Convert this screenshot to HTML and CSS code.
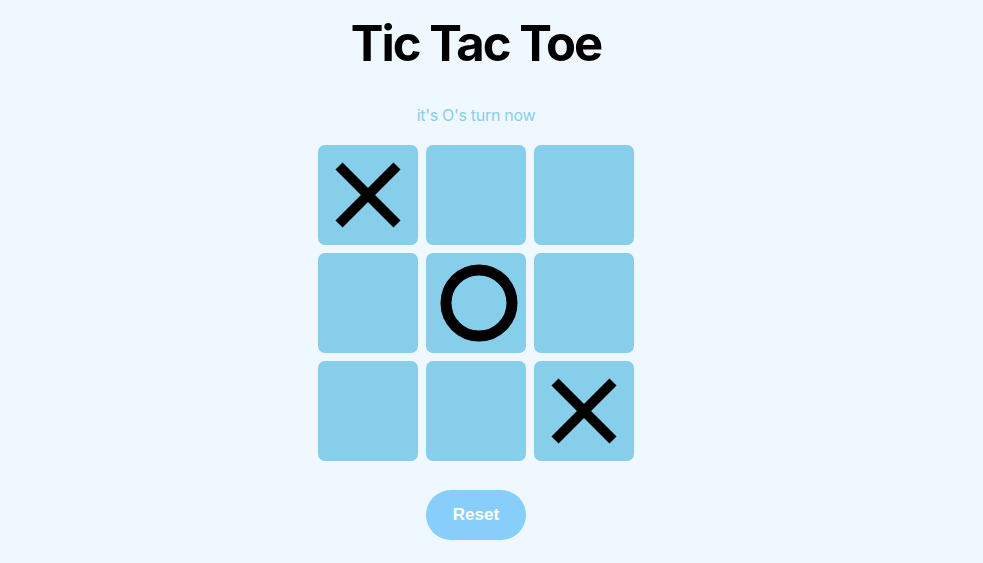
FILE: index.html
```html
<!DOCTYPE html>
<html lang="en">
<head>
<meta charset="utf-8">
<title>Tic Tac Toe</title>
<link rel="stylesheet" href="styles.css">
</head>
<body>
<main class="game">
  <h1 class="title">Tic Tac Toe</h1>
  <p class="status">it's O's turn now</p>
  <div class="board">
    <div class="cell"><svg class="mark" viewBox="0 0 100 100"><line x1="21" y1="21" x2="79" y2="79"/><line x1="79" y1="21" x2="21" y2="79"/></svg></div>
    <div class="cell"></div>
    <div class="cell"></div>
    <div class="cell"></div>
    <div class="cell"><svg class="mark" viewBox="0 0 100 100"><circle cx="53" cy="50" r="33"/></svg></div>
    <div class="cell"></div>
    <div class="cell"></div>
    <div class="cell"></div>
    <div class="cell"><svg class="mark" viewBox="0 0 100 100"><line x1="21" y1="21" x2="79" y2="79"/><line x1="79" y1="21" x2="21" y2="79"/></svg></div>
  </div>
  <button class="reset" type="button">Reset</button>
</main>
</body>
</html>
```
FILE: styles.css
```css
html, body {
  margin: 0;
  padding: 0;
  background: #f0f8ff;
}
body {
  font-family: Inter, "Noto Sans", sans-serif;
  color: #000;
}
.game {
  display: flex;
  flex-direction: column;
  align-items: center;
  padding: 15px 31px 0 0;
}
.title {
  margin: 0;
  font-size: 49px;
  font-weight: 700;
  line-height: 58px;
  letter-spacing: -2px;
}
.status {
  margin: 33px 0 0;
  font-size: 16px;
  line-height: 19px;
  letter-spacing: -0.3px;
  color: #87ceeb;
}
.board {
  margin-top: 20px;
  display: grid;
  grid-template-columns: repeat(3, 100px);
  grid-template-rows: repeat(3, 100px);
  gap: 8px;
}
.cell {
  background: #87ceeb;
  border-radius: 7px;
  display: flex;
}
.mark {
  width: 100px;
  height: 100px;
  fill: none;
  stroke: #000;
  stroke-width: 10;
}
.mark circle {
  stroke-width: 11;
}
.reset {
  margin-top: 29px;
  width: 100px;
  height: 50px;
  border: none;
  border-radius: 25px;
  background: #87cefa;
  color: #fff;
  font-family: "Liberation Sans", Arial, sans-serif;
  font-weight: 700;
  font-size: 17px;
  padding: 0;
}
```
